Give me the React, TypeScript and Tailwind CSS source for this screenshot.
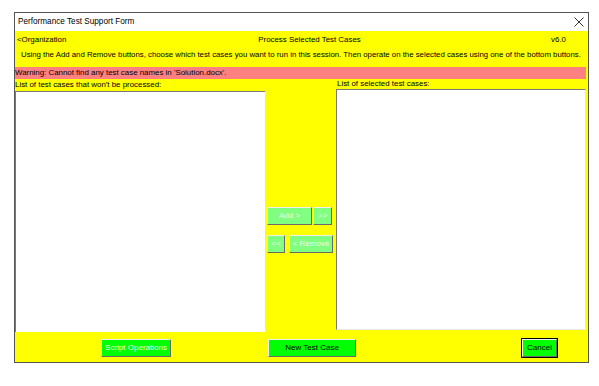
import React from 'react';

const Btn: React.FC<{ label: string; width: string; disabled?: boolean; bright?: boolean; isDefault?: boolean }> = ({
  label,
  width,
  disabled,
  bright,
  isDefault,
}) => (
  <div className={`${isDefault ? 'border border-black' : ''} flex`}>
    <div
      className={`${width} h-[18px] flex items-center justify-center whitespace-nowrap text-[8px] leading-none border-t border-l border-t-[#f0f0f0] border-l-[#f0f0f0] border-b border-r border-b-[#6a6a6a] border-r-[#6a6a6a] ${
        bright ? 'bg-[#00ff00]' : 'bg-[#80ff80]'
      } ${disabled ? 'text-[#e8ffe8]' : 'text-black'}`}
    >
      {label}
    </div>
  </div>
);

export default function App() {
  return (
    <div className="w-[599px] h-[386px] bg-white pt-[12px] pl-[14px] font-['Liberation_Sans',Arial,sans-serif]">
      <div className="w-[575px] h-[351px] border border-[#555] flex flex-col">
        {/* Title bar */}
        <div className="h-[18px] bg-white flex items-center justify-between pl-[3px] pr-[3px] text-[8.2px] text-black">
          <span>Performance Test Support Form</span>
          <svg width="10" height="10" viewBox="0 0 10 10" className="mr-[1px]">
            <path d="M0.5 0.5L9.5 9.5M9.5 0.5L0.5 9.5" stroke="#333" strokeWidth="1" />
          </svg>
        </div>

        <div className="flex-1 bg-[#ffff00] flex flex-col text-[7.9px] text-black">
          {/* Header */}
          <div className="h-[15px] flex items-center px-[2px] mt-[1px]">
            <span className="w-[80px]">&lt;Organization</span>
            <span className="flex-1 text-center pl-[16px]">Process Selected Test Cases</span>
            <span className="w-[80px] text-right pr-[20px]">v6.0</span>
          </div>
          {/* Instructions */}
          <div className="h-[16px] flex items-center pl-[6px] whitespace-nowrap text-[7.8px]">
            Using the Add and Remove buttons, choose which test cases you want to run in this session. Then operate on
            the selected cases using one of the bottom buttons.
          </div>
          {/* Warning */}
          <div className="mt-[4px] h-[12px] w-[571px] bg-[#ff8080] flex items-center leading-none">
            Warning: Cannot find any test case names in &apos;Solution.docx&apos;.
          </div>

          {/* Lists */}
          <div className="flex">
            <div className="flex flex-col w-[250px]">
              <div className="h-[11px] flex items-center leading-none">List of test cases that won&apos;t be processed:</div>
              <div className="h-[241px] bg-white border-l border-t border-[#7a7a7a] border-r-[#e6e6e6] border-b-[#e6e6e6] mt-[1px]" />
            </div>

            <div className="w-[71px] flex flex-col items-start pl-[2px] pt-[128px] gap-[10px]">
              <div className="flex gap-[1px]">
                <Btn label="Add >" width="w-[45px]" disabled />
                <Btn label=">>" width="w-[19px]" disabled />
              </div>
              <div className="flex gap-[4px]">
                <Btn label="<<" width="w-[18px]" disabled />
                <Btn label="< Remove" width="w-[44px]" disabled />
              </div>
            </div>

            <div className="flex flex-col w-[250px]">
              <div className="h-[10px] flex items-center leading-none pl-[1px]">List of selected test cases:</div>
              <div className="h-[241px] bg-white border border-[#7a7a7a] border-r-[#e6e6e6] border-b-[#e6e6e6]" />
            </div>
          </div>

          {/* Bottom buttons */}
          <div className="flex items-center mt-[6px]">
            <div className="ml-[86px]">
              <Btn label="Script Operations" width="w-[70px]" bright disabled />
            </div>
            <div className="ml-[97px]">
              <Btn label="New Test Case" width="w-[88px]" bright />
            </div>
            <div className="ml-[165px]">
              <Btn label="Cancel" width="w-[35px]" bright isDefault />
            </div>
          </div>
        </div>
      </div>
    </div>
  );
}
